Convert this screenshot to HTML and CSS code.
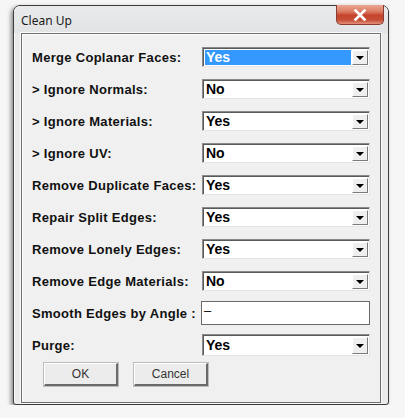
FILE: index.html
```html
<!DOCTYPE html>
<html>
<head>
<meta charset="utf-8">
<link rel="stylesheet" href="styles.css">
</head>
<body>
<div class="window">
  <div class="titlebar">
    <span class="title">Clean Up</span>
    <div class="close">
      <svg width="14" height="12" viewBox="0 0 14 12"><path d="M2.5 1.5 L11.5 10.5 M11.5 1.5 L2.5 10.5" stroke="#fff" stroke-width="2.6" stroke-linecap="square"/></svg>
    </div>
  </div>
  <div class="panel">
    <div class="rows">
      <div class="label">Merge Coplanar Faces:</div>
      <div class="select"><span class="value selected">Yes</span><span class="arrow"></span></div>

      <div class="label">&gt; Ignore Normals:</div>
      <div class="select"><span class="value">No</span><span class="arrow"></span></div>

      <div class="label">&gt; Ignore Materials:</div>
      <div class="select"><span class="value">Yes</span><span class="arrow"></span></div>

      <div class="label">&gt; Ignore UV:</div>
      <div class="select"><span class="value">No</span><span class="arrow"></span></div>

      <div class="label">Remove Duplicate Faces:</div>
      <div class="select"><span class="value">Yes</span><span class="arrow"></span></div>

      <div class="label">Repair Split Edges:</div>
      <div class="select"><span class="value">Yes</span><span class="arrow"></span></div>

      <div class="label">Remove Lonely Edges:</div>
      <div class="select"><span class="value">Yes</span><span class="arrow"></span></div>

      <div class="label">Remove Edge Materials:</div>
      <div class="select"><span class="value">No</span><span class="arrow"></span></div>

      <div class="label">Smooth Edges by Angle :</div>
      <div class="textbox">–</div>

      <div class="label">Purge:</div>
      <div class="select tall"><span class="value">Yes</span><span class="arrow"></span></div>
    </div>
    <div class="buttons">
      <div class="btn">OK</div>
      <div class="btn">Cancel</div>
    </div>
  </div>
</div>
</body>
</html>
```

FILE: styles.css
```css
html, body {
  margin: 0;
  padding: 0;
  background: #f6f6f6;
}
body {
  padding: 5px 0 0 13px;
}
.window {
  width: 374px;
  height: 398px;
  border: 1px solid #3c3c3c;
  border-radius: 7px 7px 3px 3px;
  background: #e9eaeb;
  box-shadow: -2px 2px 4px rgba(0,0,0,0.45), inset 1px 1px 0 #fafafa;
  position: relative;
  display: flex;
  flex-direction: column;
}
.titlebar {
  height: 27px;
  display: flex;
  align-items: center;
  padding-left: 7px;
  background: linear-gradient(#e9eaeb, #e2e3e4);
  border-radius: 6px 6px 0 0;
}
.title {
  font-family: "Noto Sans", "Open Sans", sans-serif;
  font-size: 12px;
  color: #1a1a1a;
  margin-top: 2px;
}
.close {
  position: absolute;
  left: 322px;
  top: -1px;
  width: 46px;
  height: 19px;
  border: 1px solid #8a3a30;
  border-top: none;
  border-radius: 0 0 5px 5px;
  background: linear-gradient(#eba995 0%, #dc7a63 35%, #c5432b 55%, #c8503a 80%, #e3907a 100%);
  display: flex;
  align-items: center;
  justify-content: center;
}
.panel {
  margin-left: 7px;
  width: 358px;
  height: 361px;
  border: 1px solid #6e6e6e;
  background: #f0f0f0;
  box-shadow: inset 1px 1px 0 #fdfdfd;
  outline: 1px solid #fafafa;
  padding-top: 7px;
  box-sizing: content-box;
}
.rows {
  display: grid;
  grid-template-columns: 170px 168px;
  grid-auto-rows: 32px;
  align-items: center;
  padding-left: 10px;
}
.label {
  font-family: "Liberation Sans", Arial, sans-serif;
  font-weight: bold;
  font-size: 13px;
  letter-spacing: 0.3px;
  color: #111;
  white-space: nowrap;
}
.select {
  height: 20px;
  box-sizing: border-box;
  border-top: 1px solid #8a8a8a;
  border-left: 1px solid #8a8a8a;
  border-bottom: 1px solid #e4e4e4;
  border-right: 1px solid #e4e4e4;
  box-shadow: inset 1px 1px 0 #5a5a5a;
  background: #fff;
  display: flex;
  align-items: stretch;
  padding: 2px 1px 1px 2px;
}
.select.tall {
  height: 22px;
}
.value {
  flex: 1;
  font-family: "Liberation Sans", Arial, sans-serif;
  font-weight: bold;
  font-size: 14px;
  color: #000;
  line-height: 15px;
  padding-left: 1px;
}
.select.tall .value {
  line-height: 17px;
}
.value.selected {
  background: #3399ff;
  color: #fff;
  margin-right: 1px;
}
.arrow {
  width: 16px;
  box-sizing: border-box;
  background: #efefef;
  border-top: 1px solid #fff;
  border-left: 1px solid #fff;
  border-right: 1px solid #7a7a7a;
  border-bottom: 1px solid #7a7a7a;
  position: relative;
}
.arrow::after {
  content: "";
  position: absolute;
  left: 3px;
  top: 50%;
  margin-top: -2px;
  border-left: 4px solid transparent;
  border-right: 4px solid transparent;
  border-top: 4px solid #000;
}
.textbox {
  height: 24px;
  width: 169px;
  box-sizing: border-box;
  margin-left: -1px;
  border: 1px solid #6a6a6a;
  background: #fff;
  font-family: "Liberation Sans", Arial, sans-serif;
  font-size: 13px;
  line-height: 15px;
  padding: 1px 2px;
  color: #000;
}
.buttons {
  display: flex;
  gap: 16px;
  padding-left: 22px;
  margin-top: 2px;
}
.btn {
  width: 74px;
  height: 23px;
  box-sizing: border-box;
  border-top: 1px solid #fff;
  border-left: 1px solid #fff;
  border-right: 2px solid #6a6a6a;
  border-bottom: 2px solid #6a6a6a;
  outline: 1px solid #bdbdbd;
  background: #ececec;
  font-family: "Liberation Sans", Arial, sans-serif;
  font-size: 12px;
  color: #333;
  display: flex;
  align-items: center;
  justify-content: center;
}
```
